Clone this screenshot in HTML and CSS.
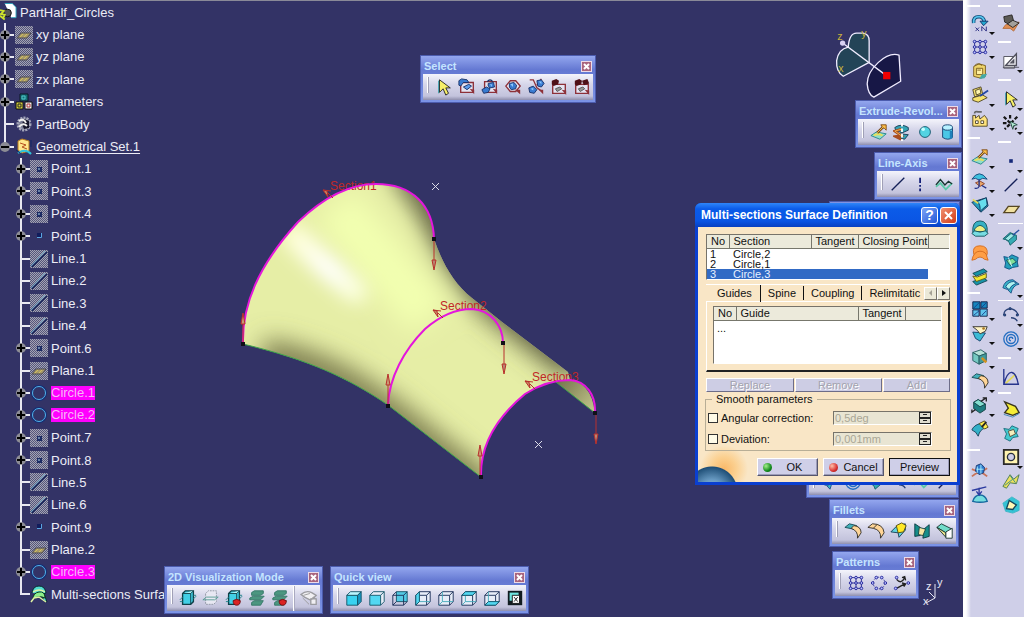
FILE: index.html
```html
<!DOCTYPE html>
<html lang="en">
<head>
<meta charset="utf-8">
<meta name="viewport" content="width=device-width, initial-scale=1">
<title>PartHalf_Circles</title>
<link rel="stylesheet" href="styles.css">
</head>
<body>
<svg class="sprite" aria-hidden="true">
<defs>
<pattern id="dither" width="2" height="2" patternUnits="userSpaceOnUse"><path fill="#55567c" d="M0 0h2v2H0z"/><path fill="#a3a3b2" d="M0 0h1v1H0zM1 1h1v1H1z"/></pattern>
</defs>
<symbol id="t-part" viewBox="0 0 18 18"><path fill="#fff" stroke="#2a9fb8" d="M5 0h8l4 4v11h-5"/><circle cx="8" cy="10" r="4" fill="#555" stroke="#111"/><path fill="none" stroke="#cfe32c" stroke-width="2" d="M0 7l4 1-3 3 4 1-2 4M0 13l5 4"/></symbol>
<symbol id="t-plane" viewBox="0 0 18 18"><path fill="url(#dither)" d="M0 0h18v18H0z"/><path fill="#a89a6a" stroke="#4d4b52" d="M2 12l4-5h10l-4 5z"/><path stroke="#d2c05d" d="M5 11l3-3M9 11l3-3"/></symbol>
<symbol id="t-params" viewBox="0 0 18 18"><path fill="#157078" stroke="#0a1824" d="M5 1h8v7H5z"/><path fill="none" stroke="#52c7c9" d="M7 3h3v3H7z"/><path fill="#d4cf3c" stroke="#111" d="M1 9h7v7H1z"/><path fill="#eee" stroke="#111" d="M10 9h7v7h-7z"/><path fill="none" stroke="#222" d="M3 11h3v3H3z"/><path fill="none" stroke="#a33" d="M12 11h3v3h-3z"/></symbol>
<symbol id="t-body" viewBox="0 0 18 18"><circle cx="9" cy="9" r="6" fill="#777a92" stroke="#a4a6ba" stroke-width="3" stroke-dasharray="2 1"/><path fill="#15152a" d="M9 4l5 2v7l-5 1-2-5z"/><path fill="none" stroke="#eee" stroke-width="2" d="M4 6q5-3 7 2M4 12q4-5 8-1"/></symbol>
<symbol id="t-set" viewBox="0 0 18 18"><path fill="#ffe78c" stroke="#b67b20" d="M3 3l4-2 7 2v10l-7 2-4-3z"/><path fill="none" stroke="#b44f20" d="M5 5l6 2-4 2 5 2"/><path fill="none" stroke="#30c2da" stroke-width="2" d="M3 15q8-5 13 1"/><path stroke="#132867" stroke-width="1" d="M16 2v7M1 12l4 3"/></symbol>
<symbol id="t-point" viewBox="0 0 18 18"><path fill="url(#dither)" d="M0 0h18v18H0z"/><path fill="#1c2b63" d="M7 7h5v5H7z"/><path fill="#6681a8" d="M8 8h2v2H8z"/></symbol>
<symbol id="t-dot" viewBox="0 0 18 18"><path fill="#101c5c" d="M7 6h5v5H7z"/><path fill="none" stroke="#5aa5e0" d="M11.500 6v4.500H7"/></symbol>
<symbol id="t-line" viewBox="0 0 18 18"><path fill="url(#dither)" d="M0 0h18v18H0z"/><path stroke="#18265a" stroke-width="1.500" d="M2 17L17 2"/><path stroke="#68a6c8" d="M1 16L15 1"/></symbol>
<symbol id="t-circle" viewBox="0 0 18 18"><circle cx="9" cy="9" r="7" fill="none" stroke="#152e76" stroke-width="2"/><circle cx="9" cy="9" r="6.500" fill="none" stroke="#53b4e8"/></symbol>
<symbol id="t-multi" viewBox="0 0 18 18"><path fill="#52dcd0" stroke="#082a2c" d="M2 8Q3 1 9 1t7 7l-3 1v6l4 2-3-8"/><path fill="#8df08a" stroke="#0d3c20" d="M3 14Q3 8 9 7t6 6q-6-3-12 1z"/><path fill="none" stroke="#dff3a4" stroke-width="1.500" d="M3 7q6-4 12 0M1 17l3-4 5-1 7 5"/></symbol>

<symbol id="i-arrow" viewBox="0 0 20 20"><path fill="#f7ef68" stroke="#202020" d="M5 2v14l4-4 3 7 3-2-3-6h5z"/><path fill="none" stroke="#329ba8" d="M4 3v14"/></symbol>
<symbol id="i-trap" viewBox="0 0 20 20"><path fill="#e4e4f2" stroke="#8d3038" stroke-width="1.500" d="M3 5h14v11H3z"/><path fill="#397bd1" stroke="#173067" d="M1 3l3-2 6 1 2 3H6L3 9 1 8z"/><path fill="#5b9ae8" stroke="#173067" d="M6 10l6-3 3 2-5 4z"/><path fill="#8d3038" d="M13 12l5 1v5z"/></symbol>
<symbol id="i-intrap" viewBox="0 0 20 20"><path fill="#e4e4f2" stroke="#8d3038" stroke-width="1.500" d="M4 4h13v12H4z"/><path fill="none" stroke="#173067" stroke-width="1.500" d="M7 4q3-4 6 0"/><path fill="#397bd1" stroke="#173067" d="M8 6l6-1 1 5-5 1-2-2zM1 13l5-3 4 2-2 4-5 1z"/><path fill="#8bc9ff" d="M10 7h2v3z"/><path fill="#8d3038" d="M13 12l5 1v5z"/></symbol>
<symbol id="i-polytrap" viewBox="0 0 20 20"><path fill="#e4e4f2" stroke="#8d3038" stroke-width="1.500" d="M2 9l5-6h6l5 6-5 6H7z"/><path fill="#397bd1" stroke="#173067" d="M6 6l5-1 3 3-1 4-5 1-2-3z"/><path fill="#8bc9ff" d="M7 7l3-1v4z"/><path fill="#8d3038" d="M12 13l6 0v5z"/></symbol>
<symbol id="i-paint" viewBox="0 0 20 20"><path fill="none" stroke="#8d3038" stroke-width="1.500" d="M3 2h4l4 9 6 4M16 1l-5 7"/><path fill="#397bd1" stroke="#173067" d="M2 11l5-2 4 4-3 4-5-1zM11 3l5-1 3 4-3 4-4-1z"/><path fill="#8bc9ff" d="M4 12l3-1v3zM13 4h3v3z"/><path fill="#8d3038" d="M13 13h5v5z"/></symbol>
<symbol id="i-outtrap" viewBox="0 0 20 20"><path fill="#e4e4f2" stroke="#8d3038" stroke-width="1.500" d="M3 7h14v10H3z"/><path fill="#4e1118" d="M2 3l5-2 3 2-1 4-5 2-2-2z"/><path fill="#999" stroke="#555" d="M6 12l5-2 2 2-5 3z"/><path fill="#8d3038" d="M13 13l5 1v5z"/></symbol>
<symbol id="i-crosstrap" viewBox="0 0 20 20"><use href="#i-outtrap"/><path fill="#4e1118" d="M10 3l6-2 2 5-6 2z"/></symbol>

<symbol id="i-extrude" viewBox="0 0 20 20"><path fill="#91dfcb" stroke="#22858b" d="M1 14l6-4 11 2-7 6z"/><path fill="none" stroke="#e7e05b" stroke-width="2" d="M4 14q5-3 10 0"/><path fill="none" stroke="#7a4a18" stroke-width="3" d="M8 11l7-7"/><path fill="#ffbe45" stroke="#7a4a18" d="M12 2h6v6l-2-2-2-1z"/><path stroke="#ffd45a" d="M8 11l7-7"/></symbol>
<symbol id="i-revolve" viewBox="0 0 20 20"><path fill="#35a3b4" stroke="#163a54" d="M2 5q7-5 15 0v3l-7 3-7-3zM8 12l9 1-4 5-5-1z"/><path fill="none" stroke="#a94d20" stroke-width="3" d="M9 7L2 9l7 5-6 1 6 3"/><path fill="none" stroke="#f4bc57" d="M9 7L2 9l7 5"/><path stroke="#fff" stroke-width="2" stroke-dasharray="4 2" d="M10 0v20"/></symbol>
<symbol id="i-sphere" viewBox="0 0 20 20"><circle cx="10" cy="10" r="6" fill="#53d3e2" stroke="#12546a"/><circle cx="8" cy="7" r="2" fill="#c6ffff"/></symbol>
<symbol id="i-cylinder" viewBox="0 0 20 20"><path fill="#4ac7e6" stroke="#154070" d="M4 5v11q6 4 11 0V5"/><ellipse cx="9.500" cy="5" rx="5.500" ry="3" fill="#b8f1ff" stroke="#154070"/><path fill="#1f82bb" d="M12 9h3v8l-3 1z"/></symbol>
<symbol id="i-line" viewBox="0 0 20 20"><path stroke="#142058" stroke-width="1.500" d="M3 17L17 3"/></symbol>
<symbol id="i-axis" viewBox="0 0 20 20"><path stroke="#142078" stroke-width="2" stroke-dasharray="6 2 2 2" d="M9 3v15"/></symbol>
<symbol id="i-poly" viewBox="0 0 20 20"><path fill="none" stroke="#5cc9a9" stroke-width="2" d="M1 13l5-4 6 7 7-7"/><path fill="none" stroke="#16332f" stroke-width="1.500" d="M1 11l5-6 5 6 4-4 4 3"/></symbol>

<symbol id="i-shade" viewBox="0 0 20 20"><path fill="#42cfe5" stroke="#104048" stroke-width="1.500" d="M4 5l3-3h9v12l-3 3H4z"/><path fill="#b0f5f8" stroke="#104048" d="M4 5h9l3-3M13 5v12"/><path fill="none" stroke="#1b8188" d="M1 12l3-3M1 14h3M16 7h3M16 11l3-3"/></symbol>
<symbol id="i-ghost" viewBox="0 0 20 20"><path fill="#e8e8f3" stroke="#8d94a1" stroke-dasharray="2 1" d="M4 5l3-3h9v12l-3 3H4z"/><path fill="none" stroke="#569b92" d="M1 12l4-3h13l-4 3z"/></symbol>
<symbol id="i-shadered" viewBox="0 0 20 20"><use href="#i-shade"/><path fill="#db2323" stroke="#701015" d="M9 13q4-3 8 0 0 5-4 5t-4-5z"/></symbol>
<symbol id="i-green" viewBox="0 0 20 20"><path fill="#4c9680" stroke="#337767" d="M4 4l3-2h10v3l-3 2H4zM2 10l4-2h12l-4 4H2zM4 15l3-2h10l-3 5H4z"/></symbol>
<symbol id="i-greenred" viewBox="0 0 20 20"><use href="#i-green"/><path fill="#db2323" stroke="#701015" d="M9 13q4-3 8 0 0 5-4 5t-4-5z"/></symbol>
<symbol id="i-hand" viewBox="0 0 20 20"><path fill="#f0eff2" stroke="#9b9ba0" stroke-width="1.500" d="M1 6q6-5 12-2l5 3-4 4-3 1-6-3zM12 11h6v6h-6z"/><path fill="none" stroke="#999" d="M4 7l7-2M3 10l7 7M13 11q2-4 4 0"/></symbol>
<symbol id="i-cube" viewBox="0 0 20 20"><path fill="#39d2f0" stroke="#135266" d="M2 7h12v11H2z"/><path fill="#baf6ff" stroke="#135266" d="M2 7l4-4h12l-4 4z"/><path fill="#1898c2" stroke="#135266" d="M14 7l4-4v11l-4 4z"/></symbol>
<symbol id="i-cubefront" viewBox="0 0 20 20"><path fill="#e7edf8" stroke="#135266" d="M2 7l4-4h12v11l-4 4M14 7l4-4"/><path fill="#53d8f2" stroke="#135266" d="M2 7h12v11H2z"/></symbol>
<symbol id="i-cubeback" viewBox="0 0 20 20"><path fill="#53cbe5" stroke="#135266" d="M6 3h12v11H6z"/><path fill="none" stroke="#172b55" d="M2 7h12v11H2zM2 7l4-4M14 7l4-4M14 18l4-4M2 18l4-4"/></symbol>
<symbol id="i-cubewire" viewBox="0 0 20 20"><path fill="#e7edf8" stroke="#172b55" d="M6 3h12v11l-4 4H2V7l4-4M2 7h12v11M14 7l4-4"/><path fill="none" stroke="#42a8b8" d="M6 3v11h12M2 18l4-4"/></symbol>
<symbol id="i-cubeleft" viewBox="0 0 20 20"><use href="#i-cubewire"/><path fill="#53d8f2" stroke="#135266" d="M2 7l4-4v11l-4 4z"/></symbol>
<symbol id="i-cubetop" viewBox="0 0 20 20"><use href="#i-cubewire"/><path fill="#53d8f2" stroke="#135266" d="M2 7l4-4h12l-4 4z"/></symbol>
<symbol id="i-cubebottom" viewBox="0 0 20 20"><use href="#i-cubewire"/><path fill="#53d8f2" stroke="#135266" d="M2 18l4-4h12l-4 4z"/></symbol>
<symbol id="i-views" viewBox="0 0 20 20"><path fill="#111b20" d="M2 2h16v16H2z"/><path fill="#70e5df" d="M4 4h10v9H4z"/><path fill="#fff" stroke="#111" d="M7 7h8v9H7z"/><path fill="none" stroke="#111" d="M9 9l4 5M13 9l-4 5"/></symbol>

<symbol id="i-fillet" viewBox="0 0 20 20"><path fill="#43b1ba" stroke="#184c56" d="M1 6l5-4 8 2 2 5z"/><path fill="#ffd597" stroke="#302c25" d="M8 7l3-3q8 1 8 8l-4 6q1-8-7-11z"/></symbol>
<symbol id="i-fillet2" viewBox="0 0 20 20"><path fill="#ffd597" stroke="#302c25" d="M1 6l5-4q12 0 13 10l-4 6q1-9-8-11z"/><path fill="none" stroke="#302c25" d="M7 7l4-4"/></symbol>
<symbol id="i-fillet3" viewBox="0 0 20 20"><path fill="#62d4df" stroke="#123c55" d="M1 11l7-7 9-2v7l-7 8-1-5z"/><path fill="#ffe928" stroke="#514814" d="M7 4l6-3 5 3-3 7-6 1z"/></symbol>
<symbol id="i-fillet4" viewBox="0 0 20 20"><path fill="#158d8a" stroke="#0a3940" d="M2 2l6 4v9l-6 1zM12 8l6-5v13l-7 2z"/><path fill="#f6e6a1" stroke="#15423d" d="M7 6l7 2-3 7-5-1z"/></symbol>
<symbol id="i-fillet5" viewBox="0 0 20 20"><path fill="#71dcca" stroke="#18342f" d="M1 6l5-4 12 6-7 4z"/><path fill="#efe48d" stroke="#18342f" d="M1 6l10 6v5z"/><path fill="#fff" stroke="#18342f" d="M11 11l7-4v11h-7z"/></symbol>
<symbol id="i-grid" viewBox="0 0 20 20"><path fill="none" stroke="#27278f" d="M4 4h12v12H4zM10 4v12M4 10h12"/><g fill="#b8c2ff" stroke="#202096"><circle cx="4" cy="4" r="1.500"/><circle cx="10" cy="4" r="1.500"/><circle cx="16" cy="4" r="1.500"/><circle cx="4" cy="10" r="1.500"/><circle cx="10" cy="10" r="1.500"/><circle cx="16" cy="10" r="1.500"/><circle cx="4" cy="16" r="1.500"/><circle cx="10" cy="16" r="1.500"/><circle cx="16" cy="16" r="1.500"/></g></symbol>
<symbol id="i-ring" viewBox="0 0 20 20"><circle cx="10" cy="10" r="6.500" fill="none" stroke="#27278f" stroke-dasharray="2 2"/><g fill="#b8c2ff" stroke="#202096"><circle cx="7" cy="4" r="1.500"/><circle cx="13" cy="4" r="1.500"/><circle cx="3" cy="10" r="1.500"/><circle cx="17" cy="10" r="1.500"/><circle cx="7" cy="16" r="1.500"/><circle cx="13" cy="16" r="1.500"/></g></symbol>
<symbol id="i-user" viewBox="0 0 20 20"><path fill="none" stroke="#222" stroke-width="1.500" d="M4 16l9-5M10 10l4 1-2 3M4 6q5 6 9-2M10 4l3-1 1 4"/><g fill="#b8c2ff" stroke="#202096"><circle cx="4" cy="4" r="1.500"/><circle cx="3" cy="16" r="1.500"/><circle cx="17" cy="10" r="1.500"/></g></symbol>

<symbol id="i-repeat" viewBox="0 0 20 20"><path fill="none" stroke="#12507c" stroke-width="4" d="M3 10Q2 3 9 3q5 0 6 6"/><path fill="none" stroke="#57c5ed" stroke-width="2" d="M3 10Q2 3 9 3q5 0 6 6"/><path fill="#24a8ce" stroke="#123068" d="M10 8h9l-5 5z"/><path fill="none" stroke="#1f237d" d="M5 15l4 4M9 15l-4 4M12 19v-5l5 5v-5"/></symbol>
<symbol id="i-catalog" viewBox="0 0 20 20"><path fill="#efd56b" stroke="#765a19" d="M3 5l6-3 7 2v12l-5 2-8-2z"/><path fill="#fff0a2" stroke="#765a19" d="M6 7h7v7H6z"/><path fill="none" stroke="#765a19" d="M4 4q4-4 8 0M7 9h4"/><path fill="#43a8a4" d="M12 14l6-1-3 5-6 1z"/></symbol>
<symbol id="i-tray" viewBox="0 0 20 20"><path fill="#f6e26c" stroke="#4d4326" d="M2 4l9-3 2 8-9 3zM2 13l11-3 5 3-10 5-6-2z"/><path fill="#fff6b1" stroke="#4d4326" d="M5 5l5-2 1 5-5 2z"/><path stroke="#2348a4" stroke-width="2" d="M10 11l9-6"/></symbol>
<symbol id="i-factory" viewBox="0 0 20 20"><path fill="#ffe37b" stroke="#4d4326" d="M2 18V6h3v3l4-3 1 4 5-4 3 4v8z"/><path fill="none" stroke="#666" stroke-width="2" d="M4 4q0-3 4-2h4"/><path fill="#fff" stroke="#4d4326" d="M5 12h3v3H5zM11 12h3v3h-3z"/></symbol>
<symbol id="i-umbrella" viewBox="0 0 20 20"><path fill="#3ec2df" stroke="#184377" d="M1 8q8-12 17 0l-5-1-4 2-4-2z"/><path fill="#e8a66a" stroke="#8b4027" d="M5 12l5-2 5 3-5 3z"/><path fill="none" stroke="#253489" stroke-width="1.500" d="M9 8v8q-1 3-5 2M12 15l5 3"/></symbol>
<symbol id="i-offset" viewBox="0 0 20 20"><path fill="#269dbd" stroke="#10345a" d="M1 7l6-2 10-3 2 9-8 7z"/><path fill="#66ddec" stroke="#10345a" d="M7 6l10-4 1 8-8 7q1-7-3-11z"/><path stroke="#e0d95c" stroke-width="2" d="M2 4l6 4"/></symbol>
<symbol id="i-dome" viewBox="0 0 20 20"><path fill="#37b1c4" stroke="#135059" d="M2 14Q1 1 10 1t8 13l-3-1q-5-4-10 0z"/><path fill="#f0ee82" stroke="#135059" d="M4 10q6-8 12 0v3H4z"/><path fill="#76dce2" stroke="#135059" d="M1 15l3-3q6 3 12 0l3 3-4 3H5z"/></symbol>
<symbol id="i-orange" viewBox="0 0 20 20"><g fill="#ff9e45" stroke="#d36b1f"><path d="M3 11Q1 2 10 2t8 9l-2 5q-5-6-11-2z"/><path d="M1 18Q3 8 10 8t8 7l1 3-4-1q-5-5-10 0z"/></g></symbol>
<symbol id="i-blend" viewBox="0 0 20 20"><path fill="#1793a7" stroke="#0c4350" d="M2 6l12-5 4 3L6 9zM2 15l12-4 4 3-12 5z"/><path fill="#f3e731" stroke="#5d581c" d="M2 9l5 1 10-4v5L6 15z"/></symbol>
<symbol id="i-join" viewBox="0 0 20 20"><g stroke="#111d45"><path fill="#1785be" d="M2 2h8v8H2zM11 2h7v7h-7z"/><path fill="#60c4ec" d="M2 11h7v7H2zM10 10h8v8h-8z"/></g><path fill="none" stroke="#183d88" d="M3 9l6-6M12 8l5-5M3 17l6-5M12 17l5-5"/></symbol>
<symbol id="i-trim" viewBox="0 0 20 20"><path fill="#3cbad5" stroke="#123f6a" d="M2 9l14 1-6 9-5-3z"/><path fill="#fff4c2" stroke="#33302b" d="M2 3h16l-2 5-6 3-3-4z"/><circle cx="14" cy="5" r="1.500" fill="#aa751e"/></symbol>
<symbol id="i-box" viewBox="0 0 20 20"><path fill="#b7e2d8" stroke="#245a5e" d="M2 5l9-3 6 4-8 3z"/><path fill="#75c9c2" stroke="#245a5e" d="M2 5l7 4v9l-7-4z"/><path fill="#419a9c" stroke="#245a5e" d="M9 9l8-3v8l-8 4z"/><path stroke="#cf9222" stroke-width="3" d="M12 11l5 5"/></symbol>
<symbol id="i-move" viewBox="0 0 20 20"><path fill="#1e7d80" stroke="#123e43" d="M3 7l5-3 8 5v6l-6 4-7-5z"/><path fill="#84ddcf" stroke="#123e43" d="M3 7l5-3 8 5-6 3z"/><path fill="none" stroke="#222" stroke-width="1.500" d="M11 6l6-4M13 2h4v4M5 15l-4 3v-3"/></symbol>
<symbol id="i-extrap" viewBox="0 0 20 20"><path fill="#33b0c8" stroke="#123e57" d="M1 11q2-5 9-7l6 5q-6 1-8 9-2-5-7-7z"/><path fill="#ffec4d" stroke="#514814" d="M9 4l6-3 4 7-4 2z"/><path stroke="#222" stroke-width="2" d="M12 8l5-6"/></symbol>
<symbol id="i-net" viewBox="0 0 20 20"><g fill="none" stroke="#c87358" stroke-width="2"><path d="M1 8l5 2 8 3 4 3M18 7l-5 3-8 3-4 3"/></g><path fill="#2b79cd" stroke="#18356e" d="M6 4l5-2 4 4-1 6-5 2-4-4z"/><path stroke="#b1f4ff" d="M7 5v7M11 3v10M6 8h8"/></symbol>
<symbol id="i-anvil" viewBox="0 0 20 20"><path fill="#75dddf" stroke="#15699e" stroke-width="1.500" d="M2 17q2-7 8-7t8 7q-8 2-16 0z"/><path fill="none" stroke="#2c3ba0" stroke-width="1.500" d="M1 5l16-4M9 2v8M6 6l3 4 3-4"/></symbol>
<symbol id="i-chair" viewBox="0 0 20 20"><path fill="#e18f53" stroke="#b56e3c" d="M1 16l3-4 15-3-6 10-4-3z"/><path fill="#5c5a55" stroke="#26221f" d="M2 3l9-2 2 7-6 3-4-2z"/><path fill="#a3a09a" stroke="#26221f" d="M6 11l6-4 7 3-7 5z"/></symbol>
<symbol id="i-sketch" viewBox="0 0 20 20"><path fill="#fff" stroke="#4d4d58" d="M2 5h12v13H2z"/><path fill="#f6f6fa" stroke="#50505c" stroke-width="1.500" d="M4 15l12-13v13zM10 12h3v-3z"/><path stroke="#50505c" d="M1 17h18"/></symbol>
<symbol id="i-burst" viewBox="0 0 20 20"><path stroke="#171717" stroke-width="2.500" stroke-dasharray="4 2" d="M2 3l14 14M17 3L3 17M9 1v5M1 10h5"/><path fill="#b4ead4" stroke="#254b43" d="M9 8l8 4-4 1-1 4z"/></symbol>
<symbol id="i-point" viewBox="0 0 20 20"><path fill="#142878" d="M8 8h4v4H8z"/></symbol>
<symbol id="i-plane" viewBox="0 0 20 20"><path fill="#f1e1a0" stroke="#554622" stroke-width="1.500" d="M2 14l5-7h12l-5 7z"/></symbol>
<symbol id="i-tube" viewBox="0 0 20 20"><path fill="#35abb4" stroke="#145d68" d="M1 11l8-7 7 3v5l-7 6q-1-6-8-7z"/><path fill="#9de9e4" stroke="#145d68" d="M3 11l7-6 4 2-7 6z"/><path stroke="#2951a2" stroke-width="1.500" d="M12 7l7-6"/></symbol>
<symbol id="i-cross" viewBox="0 0 20 20"><path fill="#239fba" stroke="#104f83" d="M2 4l5 1 4-3 7 3-1 5 1 5-6 1-4 2-5-2 1-5z"/><path fill="#81df96" stroke="#174d63" d="M5 8l7-2 4 4-7 4z"/><path fill="none" stroke="#dcf8ff" d="M7 5l4 10"/></symbol>
<symbol id="i-sweep" viewBox="0 0 20 20"><path fill="#39b6ca" stroke="#164d85" d="M1 12q2-9 11-9l7 5q-7 1-9 10-3-5-9-6z"/><path fill="#b2f3ef" stroke="#164d85" d="M4 11q3-6 9-6l3 2q-6 2-8 7z"/></symbol>
<symbol id="i-corner" viewBox="0 0 20 20"><path fill="none" stroke="#2b4378" stroke-width="1.500" d="M2 10q0-6 7-7 7 1 9 7M10 13q5 0 7 4"/><g fill="#4d84ba" stroke="#172d62"><path d="M2 9h2v2H2zM8 2h2v2H8zM16 9h2v2h-2z"/></g></symbol>
<symbol id="i-spiral" viewBox="0 0 20 20"><g fill="none" stroke="#256fc2" stroke-width="1.500"><circle cx="10" cy="10" r="8"/><circle cx="10" cy="10" r="5"/><path d="M10 12a2 2 0 1 1 2-2"/></g></symbol>
<symbol id="i-law" viewBox="0 0 20 20"><path stroke="#e1d75b" stroke-width="2" d="M4 17L15 7"/><path fill="none" stroke="#27358c" stroke-width="1.500" d="M2 1v17h17M2 18Q6 4 11 5t7 13"/></symbol>
<symbol id="i-yellow" viewBox="0 0 20 20"><path fill="#f5ed36" stroke="#38351c" stroke-width="1.500" d="M3 2l12 5 4 7-7 3-9-3 4-5z"/><path fill="none" stroke="#3b83b1" d="M2 16l10 3 7-4"/></symbol>
<symbol id="i-map" viewBox="0 0 20 20"><path fill="#43c9cf" stroke="#176b7a" d="M2 5l6 1 3-4 7 3-2 5 2 4-6 1-3 4-6-3 2-5z"/><path fill="#f7efbb" stroke="#554a38" d="M7 8l6-2 2 5-6 3z"/></symbol>
<symbol id="i-hole" viewBox="0 0 20 20"><path fill="#fff3b0" stroke="#292929" stroke-width="2" d="M2 2h16v16H2z"/><circle cx="10" cy="10" r="4" fill="#cfcfe8" stroke="#272f3c" stroke-width="1.500"/></symbol>
<symbol id="i-wing" viewBox="0 0 20 20"><path fill="#eee15d" stroke="#47794f" d="M1 16l8-13 4 5 6-5-3 10-7-1-4 6z"/><path stroke="#368c8d" d="M3 15l9-7M9 4l6 8"/></symbol>
<symbol id="i-shield" viewBox="0 0 20 20"><path fill="#33c3d5" stroke="#3fb5c4" d="M1 8l10-7 8 5v10l-7 3-8-2z"/><path fill="#fff7b4" stroke="#14445a" stroke-width="1.500" d="M5 14l3-9 8 5-4 5z"/></symbol>
</svg>

<main class="viewport">
<svg class="scene" viewBox="225 160 390 340" role="img" aria-label="Lofted surface through three half circles">
<defs>
<clipPath id="skin"><path d="M243 344C242 305 258 266 298 222C325 196 352 184 376 184C412 184 433 205 434 239C442 262 453 283 472 298L502 322L568 372L570 380C555 381 540 383 525 394C495 419 481 445 481 477L388 405C348 378 310 360 243 344z"/></clipPath>
<filter id="soft" x="225" y="160" width="390" height="340" filterUnits="userSpaceOnUse"><feGaussianBlur stdDeviation="13"/></filter>
<filter id="glow" x="225" y="160" width="390" height="340" filterUnits="userSpaceOnUse"><feGaussianBlur stdDeviation="9"/></filter>
<linearGradient id="inner" x1="560" y1="380" x2="596" y2="410" gradientUnits="userSpaceOnUse"><stop offset="0" stop-color="#77774f"/><stop offset="1" stop-color="#c4c88c"/></linearGradient>
<linearGradient id="shine" x1="285" y1="225" x2="375" y2="312" gradientUnits="userSpaceOnUse"><stop offset="0" stop-color="#ffffd0"/><stop offset=".5" stop-color="#fff"/><stop offset="1" stop-color="#f8ffc4"/></linearGradient>
<g id="down" fill="none" stroke="#b8302c"><path d="M0 1v19"/><path fill="#b98572" d="M-2 20h4l-2 10z"/></g>
<g id="up" fill="none" stroke="#b8302c"><path d="M0 0v-20"/><path fill="#c99872" d="M-2 -20h4l-2-11z"/></g>
<path id="dir" fill="#c98f68" stroke="#b8302c" d="M9 9L4 4M-1 1l8 1M-1 1l4 1 1 6z"/>
</defs>
<g clip-path="url(#skin)">
<path fill="#e6eea6" d="M225 160h390v340H225z"/>
<g filter="url(#soft)" fill="none">
<path stroke="#f2ffb0" stroke-width="50" d="M335 205L430 318"/>
<path stroke="#75744a" stroke-width="30" d="M262 354C320 364 355 388 388 412L486 490"/>
<path stroke="#57563a" stroke-width="40" d="M405 160Q438 200 450 234C462 262 480 285 508 308L580 364"/>
</g>
<path filter="url(#glow)" fill="none" stroke="url(#shine)" stroke-width="24" stroke-linecap="round" d="M294 236Q318 260 356 292"/>
</g>
<path fill="url(#inner)" d="M556 382Q590 373 595 413z"/>
<path fill="none" stroke="#3da64a" d="M243 344C310 360 348 378 388 405L481 477M556 382l39 31"/>
<g class="section-name"><text x="330" y="190">Section1</text><text x="440" y="310">Section2</text><text x="532" y="381">Section3</text></g>
<g fill="none" stroke="#e416dc" stroke-width="2"><path d="M243 344C242 305 258 266 298 222C325 196 352 184 376 184C412 184 433 205 434 239"/><path d="M388 405C389 378 404 350 425 329C441 315 458 309 472 309C491 310 503 326 503 343"/><path d="M481 477C480 445 496 418 525 394C542 383 557 380 570 380C586 381 596 395 595 413"/></g>
<use href="#down" x="434" y="240"/><use href="#down" x="504" y="344"/><use href="#down" x="596" y="414"/>
<use href="#up" x="243" y="344"/><use href="#up" x="388" y="405"/><use href="#up" x="480" y="476"/>
<use href="#dir" x="324" y="189"/><use href="#dir" x="434" y="309"/><use href="#dir" x="526" y="380"/>
<g fill="#101018"><path d="M241 342h4v4h-4zM432 237h4v4h-4zM386 404h4v4h-4zM501 341h4v4h-4zM479 475h4v4h-4zM593 411h4v4h-4z"/></g>
<path stroke="#dcdce8" d="M432 183l7 7M439 183l-7 7M535 441l7 7M542 441l-7 7"/>
</svg>

<ul class="tree">
<li class="root"><svg class="ti"><use href="#t-part"/></svg><span>PartHalf_Circles</span></li>
<li class="a plus"><svg class="ti"><use href="#t-plane"/></svg><span>xy plane</span></li>
<li class="a plus"><svg class="ti"><use href="#t-plane"/></svg><span>yz plane</span></li>
<li class="a plus"><svg class="ti"><use href="#t-plane"/></svg><span>zx plane</span></li>
<li class="a plus"><svg class="ti"><use href="#t-params"/></svg><span>Parameters</span></li>
<li class="a"><svg class="ti"><use href="#t-body"/></svg><span>PartBody</span></li>
<li class="a minus last"><svg class="ti"><use href="#t-set"/></svg><span class="active">Geometrical Set.1</span></li>
<li class="b plus"><svg class="ti"><use href="#t-point"/></svg><span>Point.1</span></li>
<li class="b plus"><svg class="ti"><use href="#t-point"/></svg><span>Point.3</span></li>
<li class="b plus"><svg class="ti"><use href="#t-point"/></svg><span>Point.4</span></li>
<li class="b plus"><svg class="ti"><use href="#t-dot"/></svg><span>Point.5</span></li>
<li class="b"><svg class="ti"><use href="#t-line"/></svg><span>Line.1</span></li>
<li class="b"><svg class="ti"><use href="#t-line"/></svg><span>Line.2</span></li>
<li class="b"><svg class="ti"><use href="#t-line"/></svg><span>Line.3</span></li>
<li class="b"><svg class="ti"><use href="#t-line"/></svg><span>Line.4</span></li>
<li class="b plus"><svg class="ti"><use href="#t-point"/></svg><span>Point.6</span></li>
<li class="b"><svg class="ti"><use href="#t-plane"/></svg><span>Plane.1</span></li>
<li class="b plus"><svg class="ti"><use href="#t-circle"/></svg><span class="picked">Circle.1</span></li>
<li class="b plus"><svg class="ti"><use href="#t-circle"/></svg><span class="picked">Circle.2</span></li>
<li class="b plus"><svg class="ti"><use href="#t-point"/></svg><span>Point.7</span></li>
<li class="b plus"><svg class="ti"><use href="#t-point"/></svg><span>Point.8</span></li>
<li class="b"><svg class="ti"><use href="#t-line"/></svg><span>Line.5</span></li>
<li class="b"><svg class="ti"><use href="#t-line"/></svg><span>Line.6</span></li>
<li class="b plus"><svg class="ti"><use href="#t-dot"/></svg><span>Point.9</span></li>
<li class="b"><svg class="ti"><use href="#t-plane"/></svg><span>Plane.2</span></li>
<li class="b plus"><svg class="ti"><use href="#t-circle"/></svg><span class="picked">Circle.3</span></li>
<li class="b last"><svg class="ti"><use href="#t-multi"/></svg><span>Multi-sections Surfa</span></li>
</ul>

<svg class="compass" viewBox="30 15 220 225" role="img" aria-label="Compass">
<g stroke="#f0ecff" stroke-width="4" stroke-linejoin="round"><path fill="#234457" d="M85 84Q88 42 110 42H130Q148 45 148 65V130L70 172Q48 158 50 125Q55 90 85 84z"/><path fill="#171746" d="M238 108C200 96 142 150 142 195Q145 228 162 235L243 187z"/><path d="M68 72L200 170"/></g>
<circle cx="68" cy="72" r="8" fill="#d8d0f4"/><path fill="#f00000" d="M190 159h22v22h-22z"/>
<g class="compass-name"><text x="52" y="64">z</text><text x="124" y="54">y</text><text x="55" y="160">x</text></g>
</svg>
<svg class="triad" viewBox="0 0 24 32" role="img" aria-label="Axes"><path fill="none" stroke="#e8e8f4" d="M13 9v14l-9 5M13 23l-6-6"/><g class="triad-name"><text x="15" y="11">y</text><text x="4" y="15">z</text><text x="1" y="30">x</text></g></svg>

<section class="bar bar-select"><header><h2>Select</h2><button class="x" aria-label="Close"><svg viewBox="0 0 9 9"><path d="M2 2l5 5M7 2L2 7"/></svg></button></header><div class="tools"><i class="grip"></i><button aria-label="Select"><svg><use href="#i-arrow"/></svg></button><button aria-label="Trap"><svg><use href="#i-trap"/></svg></button><button aria-label="Intersecting trap"><svg><use href="#i-intrap"/></svg></button><button aria-label="Polygon trap"><svg><use href="#i-polytrap"/></svg></button><button aria-label="Paint stroke"><svg><use href="#i-paint"/></svg></button><button aria-label="Outside trap"><svg><use href="#i-outtrap"/></svg></button><button aria-label="Outside intersecting trap"><svg><use href="#i-crosstrap"/></svg></button></div></section>

<section class="bar bar-extrude"><header><h2>Extrude-Revol...</h2><button class="x" aria-label="Close"><svg viewBox="0 0 9 9"><path d="M2 2l5 5M7 2L2 7"/></svg></button></header><div class="tools"><i class="grip"></i><button aria-label="Extrude"><svg><use href="#i-extrude"/></svg></button><button aria-label="Revolve"><svg><use href="#i-revolve"/></svg></button><button aria-label="Sphere"><svg><use href="#i-sphere"/></svg></button><button aria-label="Cylinder"><svg><use href="#i-cylinder"/></svg></button></div></section>

<section class="bar bar-line"><header><h2>Line-Axis</h2><button class="x" aria-label="Close"><svg viewBox="0 0 9 9"><path d="M2 2l5 5M7 2L2 7"/></svg></button></header><div class="tools"><i class="grip"></i><button aria-label="Line"><svg><use href="#i-line"/></svg></button><button aria-label="Axis"><svg><use href="#i-axis"/></svg></button><button aria-label="Polyline"><svg><use href="#i-poly"/></svg></button></div></section>

<section class="bar bar-vis"><header><h2>2D Visualization Mode</h2><button class="x" aria-label="Close"><svg viewBox="0 0 9 9"><path d="M2 2l5 5M7 2L2 7"/></svg></button></header><div class="tools"><i class="grip"></i><button aria-label="Standard"><svg><use href="#i-shade"/></svg></button><button aria-label="Hidden"><svg><use href="#i-ghost"/></svg></button><button aria-label="Pickable"><svg><use href="#i-shadered"/></svg></button><button aria-label="Low light"><svg><use href="#i-green"/></svg></button><button aria-label="Low light pickable"><svg><use href="#i-greenred"/></svg></button><i class="rule"></i><button aria-label="Lock" disabled><svg><use href="#i-hand"/></svg></button></div></section>

<section class="bar bar-quick"><header><h2>Quick view</h2><button class="x" aria-label="Close"><svg viewBox="0 0 9 9"><path d="M2 2l5 5M7 2L2 7"/></svg></button></header><div class="tools"><i class="grip"></i><button aria-label="Isometric"><svg><use href="#i-cube"/></svg></button><button aria-label="Front"><svg><use href="#i-cubefront"/></svg></button><button aria-label="Back"><svg><use href="#i-cubeback"/></svg></button><button aria-label="Left"><svg><use href="#i-cubeleft"/></svg></button><button aria-label="Right"><svg><use href="#i-cubewire"/></svg></button><button aria-label="Top"><svg><use href="#i-cubetop"/></svg></button><button aria-label="Bottom"><svg><use href="#i-cubebottom"/></svg></button><button aria-label="Named views"><svg><use href="#i-views"/></svg></button></div></section>

<section class="bar bar-back"><div class="tools"><i class="grip"></i><button aria-label="Project"><svg><use href="#i-sweep"/></svg></button><button aria-label="Circle"><svg><use href="#i-spiral"/></svg></button><button aria-label="Combine"><svg><use href="#i-tube"/></svg></button><button aria-label="Corner"><svg><use href="#i-corner"/></svg></button><button aria-label="Connect"><svg><use href="#i-poly"/></svg></button><button aria-label="Segment"><svg><use href="#i-line"/></svg></button></div></section>
<div class="bar bar-edge"></div>

<section class="bar bar-fillets"><header><h2>Fillets</h2><button class="x" aria-label="Close"><svg viewBox="0 0 9 9"><path d="M2 2l5 5M7 2L2 7"/></svg></button></header><div class="tools"><i class="grip"></i><button aria-label="Shape fillet"><svg><use href="#i-fillet"/></svg></button><button aria-label="Edge fillet"><svg><use href="#i-fillet2"/></svg></button><button aria-label="Styling fillet"><svg><use href="#i-fillet3"/></svg></button><button aria-label="Face fillet"><svg><use href="#i-fillet4"/></svg></button><button aria-label="Tritangent fillet"><svg><use href="#i-fillet5"/></svg></button></div></section>

<section class="bar bar-patterns"><header><h2>Patterns</h2><button class="x" aria-label="Close"><svg viewBox="0 0 9 9"><path d="M2 2l5 5M7 2L2 7"/></svg></button></header><div class="tools"><i class="grip"></i><button aria-label="Rectangular pattern"><svg><use href="#i-grid"/></svg></button><button aria-label="Circular pattern"><svg><use href="#i-ring"/></svg></button><button aria-label="User pattern"><svg><use href="#i-user"/></svg></button></div></section>

<form class="dialog" role="dialog" aria-labelledby="dlg-title">
<header class="dlg-head"><h1 id="dlg-title">Multi-sections Surface Definition</h1><button type="button" class="help" aria-label="Help">?</button><button type="button" class="shut" aria-label="Close"><svg viewBox="0 0 15 15"><path d="M4 4l7 7M11 4l-7 7"/></svg></button></header>
<div class="dlg-body">
<div class="list sections"><table>
<colgroup><col class="c-no"><col class="c-section"><col class="c-tangent"><col class="c-closing"><col></colgroup>
<thead><tr><th>No</th><th>Section</th><th>Tangent</th><th>Closing Point</th><th></th></tr></thead>
<tbody><tr><td>1</td><td>Circle,2</td><td></td><td></td><td></td></tr><tr><td>2</td><td>Circle,1</td><td></td><td></td><td></td></tr><tr class="chosen"><td>3</td><td>Circle,3</td><td></td><td></td><td></td></tr></tbody>
</table></div>
<div class="tabset">
<div class="tabs"><button type="button" class="tab current">Guides</button><button type="button" class="tab">Spine</button><button type="button" class="tab">Coupling</button><button type="button" class="tab cut">Relimitatic</button><button type="button" class="step prev" aria-label="Previous tab"></button><button type="button" class="step next" aria-label="Next tab"></button></div>
<div class="panel"><div class="list guides"><table>
<colgroup><col class="c-no"><col class="c-guide"><col class="c-tangent"><col></colgroup>
<thead><tr><th>No</th><th>Guide</th><th>Tangent</th><th></th></tr></thead>
<tbody><tr><td>...</td><td></td><td></td><td></td></tr></tbody>
</table></div></div>
</div>
<div class="edit"><button type="button" disabled>Replace</button><button type="button" disabled>Remove</button><button type="button" disabled>Add</button></div>
<fieldset><legend>Smooth parameters</legend>
<div class="param"><input type="checkbox" id="ang"><label for="ang">Angular correction:</label><span class="spin"><input type="text" value="0,5deg" aria-label="Angle" disabled><span class="ud"><button type="button" aria-label="Increase"></button><button type="button" aria-label="Decrease"></button></span></span></div>
<div class="param"><input type="checkbox" id="dev"><label for="dev">Deviation:</label><span class="spin"><input type="text" value="0,001mm" aria-label="Distance" disabled><span class="ud"><button type="button" aria-label="Increase"></button><button type="button" aria-label="Decrease"></button></span></span></div>
</fieldset>
<footer class="actions"><button type="submit"><i class="led green"></i><span>OK</span></button><button type="button"><i class="led red"></i><span>Cancel</span></button><button type="button" class="default"><span>Preview</span></button></footer>
</div>
</form>
</main>

<aside class="dock">
<div class="rail">
<i class="sep top"></i>
<button class="more" aria-label="Object repetition"><svg><use href="#i-repeat"/></svg></button><button class="more" aria-label="Grid"><svg><use href="#i-grid"/></svg></button><button aria-label="Catalog"><svg><use href="#i-catalog"/></svg></button><button class="more" aria-label="Tray"><svg><use href="#i-tray"/></svg></button><button class="more" aria-label="Factory"><svg><use href="#i-factory"/></svg></button>
<i class="sep"></i>
<button class="more" aria-label="Extrude"><svg><use href="#i-extrude"/></svg></button><button class="more" aria-label="Variable offset"><svg><use href="#i-umbrella"/></svg></button><button class="more" aria-label="Offset"><svg><use href="#i-offset"/></svg></button><button aria-label="Fill"><svg><use href="#i-dome"/></svg></button><button aria-label="Multi-sections surface"><svg><use href="#i-orange"/></svg></button><button aria-label="Blend"><svg><use href="#i-blend"/></svg></button>
<i class="sep narrow"></i>
<button class="more" aria-label="Join"><svg><use href="#i-join"/></svg></button><button class="more" aria-label="Trim"><svg><use href="#i-trim"/></svg></button><button class="more" aria-label="Extract"><svg><use href="#i-box"/></svg></button><button class="more" aria-label="Fillet"><svg><use href="#i-fillet"/></svg></button><button class="more" aria-label="Translate"><svg><use href="#i-move"/></svg></button><button aria-label="Extrapolate"><svg><use href="#i-extrap"/></svg></button>
<i class="sep wide"></i>
<button aria-label="Connect checker"><svg><use href="#i-net"/></svg></button><button aria-label="Draft analysis"><svg><use href="#i-anvil"/></svg></button>
</div>
<div class="rail">
<i class="sep top"></i>
<button aria-label="Workbench"><svg><use href="#i-chair"/></svg></button>
<i class="sep"></i>
<button class="more" aria-label="Sketch"><svg><use href="#i-sketch"/></svg></button>
<i class="sep"></i>
<button class="more" aria-label="Select"><svg><use href="#i-arrow"/></svg></button><button class="more" aria-label="Selection sets"><svg><use href="#i-burst"/></svg></button>
<i class="sep"></i>
<button class="more" aria-label="Point"><svg><use href="#i-point"/></svg></button><button class="more" aria-label="Line"><svg><use href="#i-line"/></svg></button><button aria-label="Plane"><svg><use href="#i-plane"/></svg></button>
<i class="sep thin"></i>
<button class="more" aria-label="Projection"><svg><use href="#i-tube"/></svg></button><button aria-label="Intersection"><svg><use href="#i-cross"/></svg></button><button class="more" aria-label="Parallel curve"><svg><use href="#i-sweep"/></svg></button>
<i class="sep thin"></i>
<button class="more" aria-label="Corner"><svg><use href="#i-corner"/></svg></button><button class="more" aria-label="Spiral"><svg><use href="#i-spiral"/></svg></button>
<i class="sep"></i>
<button aria-label="Law"><svg><use href="#i-law"/></svg></button>
<i class="sep narrow"></i>
<button aria-label="Bump"><svg><use href="#i-yellow"/></svg></button><button aria-label="Wrap curve"><svg><use href="#i-map"/></svg></button><button class="more" aria-label="Hole"><svg><use href="#i-hole"/></svg></button><button aria-label="Wrap surface"><svg><use href="#i-wing"/></svg></button><button aria-label="Shape morphing"><svg><use href="#i-shield"/></svg></button>
</div>
</aside>
</body>
</html>
```
FILE: styles.css
```css
* { box-sizing: border-box; }
body {
  margin: 0;
  display: flex;
  height: 100vh;
  overflow: hidden;
  background: #333366;
  font: 11px/12px "Liberation Sans", Arial, sans-serif;
  color: #111;
}
button, input { font: inherit; color: inherit; margin: 0; padding: 0; border: 0; background: none; }
h1, h2 { margin: 0; }
.sprite { position: absolute; width: 0; height: 0; }

.viewport { position: relative; flex: 1; border-top: 1px solid #8a8a98; overflow: hidden; }
.scene { position: absolute; left: 225px; top: 159px; width: 390px; height: 340px; }
.section-name { fill: #c02828; font-size: 12px; }

/* specification tree */
.tree {
  position: relative;
  display: grid;
  grid-auto-rows: 1fr;
  width: 164px;
  height: 98vh;
  margin: 0;
  padding: 0;
  list-style: none;
  font-size: 13px;
  line-height: 14px;
  color: #ececf6;
}
.tree li { position: relative; display: flex; align-items: center; gap: 3px; white-space: nowrap; }
.tree .a { padding-left: 15px; }
.tree .b { padding-left: 30px; }
.ti { flex: none; width: 18px; height: 18px; }
.tree span { padding-top: 1px; }
.tree .active { text-decoration: underline; text-underline-offset: 2px; }
.tree .picked { padding: 0; background: #ff00ff; color: #f6b8f6; }
.root .ti { width: 17px; }
.tree .a, .tree .b {
  background-repeat: no-repeat;
  background-image: linear-gradient(#e8e8f0, #e8e8f0), linear-gradient(#e8e8f0, #e8e8f0);
}
.tree .a { background-size: 2px 100%, 10px 2px; background-position: 4px 0, 4px 50%; }
.tree .b { background-size: 2px 100%, 10px 2px; background-position: 20px 0, 20px 50%; }
.tree .a.last { background-size: 2px 50%, 10px 2px; }
.tree .b.last { background-size: 2px 50%, 10px 2px; }
.plus::before, .minus::before {
  content: "";
  position: absolute;
  left: 0;
  width: 10px;
  height: 10px;
  border-radius: 50%;
  background: linear-gradient(#000, #000) center / 8px 2px no-repeat, linear-gradient(#000, #000) center / 2px 8px no-repeat, #8c8c94;
}
.minus::before { background: linear-gradient(#000, #000) center / 8px 2px no-repeat, #8c8c94; }
.b.plus::before { left: 16px; }

.compass { position: absolute; right: 60px; top: 23px; width: 73px; height: 75px; }
.compass-name { fill: #c8b23c; font-size: 32px; }
.triad { position: absolute; right: 17px; bottom: 10px; width: 24px; height: 32px; }
.triad-name { fill: #e8e8f4; font-size: 11px; }

/* floating toolbars */
.bar {
  position: absolute;
  padding: 2px;
  border: 1px solid #4c5cae;
  background: linear-gradient(#93a6ee, #6478d2 30%, #7c94e6);
}
.bar header { display: flex; align-items: center; justify-content: space-between; height: 16px; padding: 0 1px; }
.bar h2 { font-size: 11px; line-height: 14px; font-weight: bold; color: #c4e4ff; white-space: nowrap; }
.x { width: 11px; height: 11px; border: 1px solid #eddbe8; background: #a9657e; line-height: 0; }
.x svg { width: 9px; height: 9px; }
.x path, .shut path { stroke: #fff; stroke-width: 2; }
.tools {
  display: flex;
  align-items: center;
  height: 26px;
  padding-left: 4px;
  background: linear-gradient(#f4f4fb, #d6d6ea 40%, #c3c3dc 85%, #8f8fae);
}
.tools button { width: 23px; height: 24px; display: grid; place-items: center; }
.tools svg, .rail svg { width: 18px; height: 18px; }
.grip { width: 2px; height: 16px; margin: 0 3px 4px 0; border-right: 1px solid #a0a0b6; background: #fff; }
.rule { width: 2px; height: 25px; margin: 0 2px; background: #fff; border-right: 1px solid #aaaac0; }
.bar-select { left: 420px; top: 54px; }
.bar-extrude { right: 1px; top: 99px; }
.bar-line { right: 1px; top: 151px; min-width: 88px; }
.bar-vis { left: 164px; bottom: 3px; }
.bar-quick { left: 330px; bottom: 3px; }
.bar-back { right: 4px; top: 465px; }
.bar-edge { right: 3px; top: 200px; width: 131px; }
.bar-fillets { right: 4px; top: 498px; }
.bar-patterns { right: 44px; top: 550px; min-width: 87px; }

/* definition dialog */
.dialog {
  position: absolute;
  right: 3px;
  top: 202px;
  width: 265px;
  padding: 0 3px 3px;
  border-radius: 6px 6px 0 0;
  background: #0a3fd0;
}
.dlg-head {
  display: flex;
  align-items: center;
  gap: 2px;
  height: 24px;
  margin: 0 -3px;
  padding: 0 3px 0 6px;
  border-radius: 6px 6px 0 0;
  background: linear-gradient(#2f86f8, #0b5be8 25%, #0a55e4 75%, #0840c0);
}
.dlg-head h1 { flex: 1; font-size: 12px; line-height: 14px; color: #fff; white-space: nowrap; }
.help, .shut {
  width: 17px;
  height: 17px;
  border: 1px solid #fff;
  border-radius: 3px;
  background: linear-gradient(135deg, #7ba4f6, #2458d8);
  color: #fff;
  font-size: 14px;
  line-height: 14px;
  font-weight: bold;
}
.shut { background: linear-gradient(135deg, #f09070, #d23c18); line-height: 0; }
.shut svg { width: 15px; height: 15px; }
.dlg-body {
  padding: 7px 7px 6px 8px;
  background:
    radial-gradient(circle at 14px 265px, #9cc8e8 0, #6a9cc4 12px, #1f4f77 25px, transparent 26px),
    radial-gradient(circle at 26px 242px, #f9b868 0, #fbd090 12px, transparent 24px),
    #f9e6c6;
}
.list { border: 1px solid; border-color: #77736a #fff #fff #77736a; background: #fff; }
.list table { width: 100%; border-collapse: collapse; table-layout: fixed; }
.list th {
  height: 13px;
  padding: 0 0 0 4px;
  border-right: 1px solid #77776c;
  border-bottom: 1px solid #77776c;
  background: #eceadb;
  font-weight: normal;
  line-height: 12px;
  text-align: left;
  white-space: nowrap;
}
.list th:last-child { border-right: 0; }
.list td { height: 10px; padding: 0 0 0 4px; line-height: 10px; white-space: nowrap; }
.list td:first-child { padding-left: 3px; }
.c-no { width: 22px; }
.c-section { width: 82px; }
.c-guide { width: 122px; }
.c-tangent { width: 47px; }
.c-closing { width: 70px; }
.sections { height: 46px; }
.chosen td { background: #316ac5; color: #e8f0ff; }
.chosen td:last-child { background: #fff; }
.tabset { margin-top: 4px; }
.tabs { display: flex; align-items: center; height: 17px; padding-left: 3px; border-top: 1px solid #fff; }
.tab { padding: 0 7px; height: 14px; border-right: 1px solid #111; }
.tab.current { height: 17px; padding: 0 8px; }
.tab.cut { flex: 1; min-width: 0; padding-right: 0; text-align: left; white-space: nowrap; border-right: 0; }
.step { display: grid; place-items: center; width: 13px; height: 13px; border: 1px solid; border-color: #fff #77736a #77736a #fff; background: #ece9d8; }
.step::before { content: ""; border: 3px solid transparent; }
.prev::before { border-right-color: #a5a296; border-left: 0; }
.next::before { border-left: 4px solid #111; border-right: 0; }
.panel { padding: 4px 6px 6px; border: 1px solid; border-color: #fff #222 #222 #fff; border-width: 1px 2px 2px 1px; }
.guides { height: 58px; }
.guides td { height: 16px; }
.edit { display: grid; grid-template-columns: 88px 87px 1fr; gap: 1px; margin-top: 6px; }
.edit button { height: 14px; border: 1px solid; border-color: #fff #6d6d88 #6d6d88 #fff; background: #cdcde4; color: #a3a3ae; line-height: 10px; text-shadow: 1px 1px #fff; }
fieldset { margin: 2px -1px 0 -1px; padding: 3px 18px 1px 2px; border: 1px solid #b8ae96; }
legend { margin-left: 4px; padding: 0 4px; line-height: 10px; }
.param { display: flex; align-items: center; gap: 3px; height: 21px; }
.param label { flex: 1; white-space: nowrap; }
.param input[type="checkbox"] { appearance: none; width: 10px; height: 10px; border: 1px solid #333; background: #fffbe8; }
.spin { display: flex; width: 99px; height: 14px; border: 1px solid; border-color: #77736a #fff #fff #77736a; background: #e9e5d3; }
.spin input { flex: 1; min-width: 0; padding-left: 1px; color: #aaa796; line-height: 11px; }
.ud { display: flex; flex-direction: column; width: 12px; }
.ud button { flex: 1; border: 1px solid #222; background: linear-gradient(#222, #222) center / 4px 1px no-repeat, #e0ddd0; }
.actions { display: flex; justify-content: flex-end; gap: 5px; margin-top: 7px; }
.actions button { display: flex; align-items: center; width: 61px; height: 18px; border: 1px solid; border-color: #fff #55556c #55556c #fff; background: #cfcfe8; box-shadow: inset -1px -1px #9c9cb8; }
.actions span { flex: 1; text-align: center; }
.actions .default { border-color: #111; }
.led { width: 9px; height: 9px; margin-left: 5px; border-radius: 50%; }
.green { background: radial-gradient(circle at 3px 3px, #a4f08c, #128a1c 60%, #064a0c); }
.red { background: radial-gradient(circle at 3px 3px, #ffc0a8, #d83030 60%, #801010); }

/* docked tool rails */
.dock { display: flex; justify-content: space-between; width: 61px; padding: 0 1px 0 4px; background: linear-gradient(90deg, #fff 0, #fff 3px, #cfcfe8 8px, #cfcfe8); }
.rail { display: flex; flex-direction: column; width: 25px; }
.rail:first-child { width: 28px; }
.rail button { position: relative; flex: none; height: 24px; padding: 3px 4px; text-align: left; line-height: 0; }
.more::after { content: ""; position: absolute; right: 0; bottom: 0; border: 3px solid transparent; border-top-color: #111; border-bottom: 0; }
.sep { flex: none; height: 14px; background: linear-gradient(#fff, #fff) 0 50% / 13px 2px no-repeat; }
.sep.top { height: 11px; }
.sep.narrow { height: 8px; }
.sep.wide { height: 18px; }
.sep.thin { height: 5px; background-size: 100% 1px; }
```
